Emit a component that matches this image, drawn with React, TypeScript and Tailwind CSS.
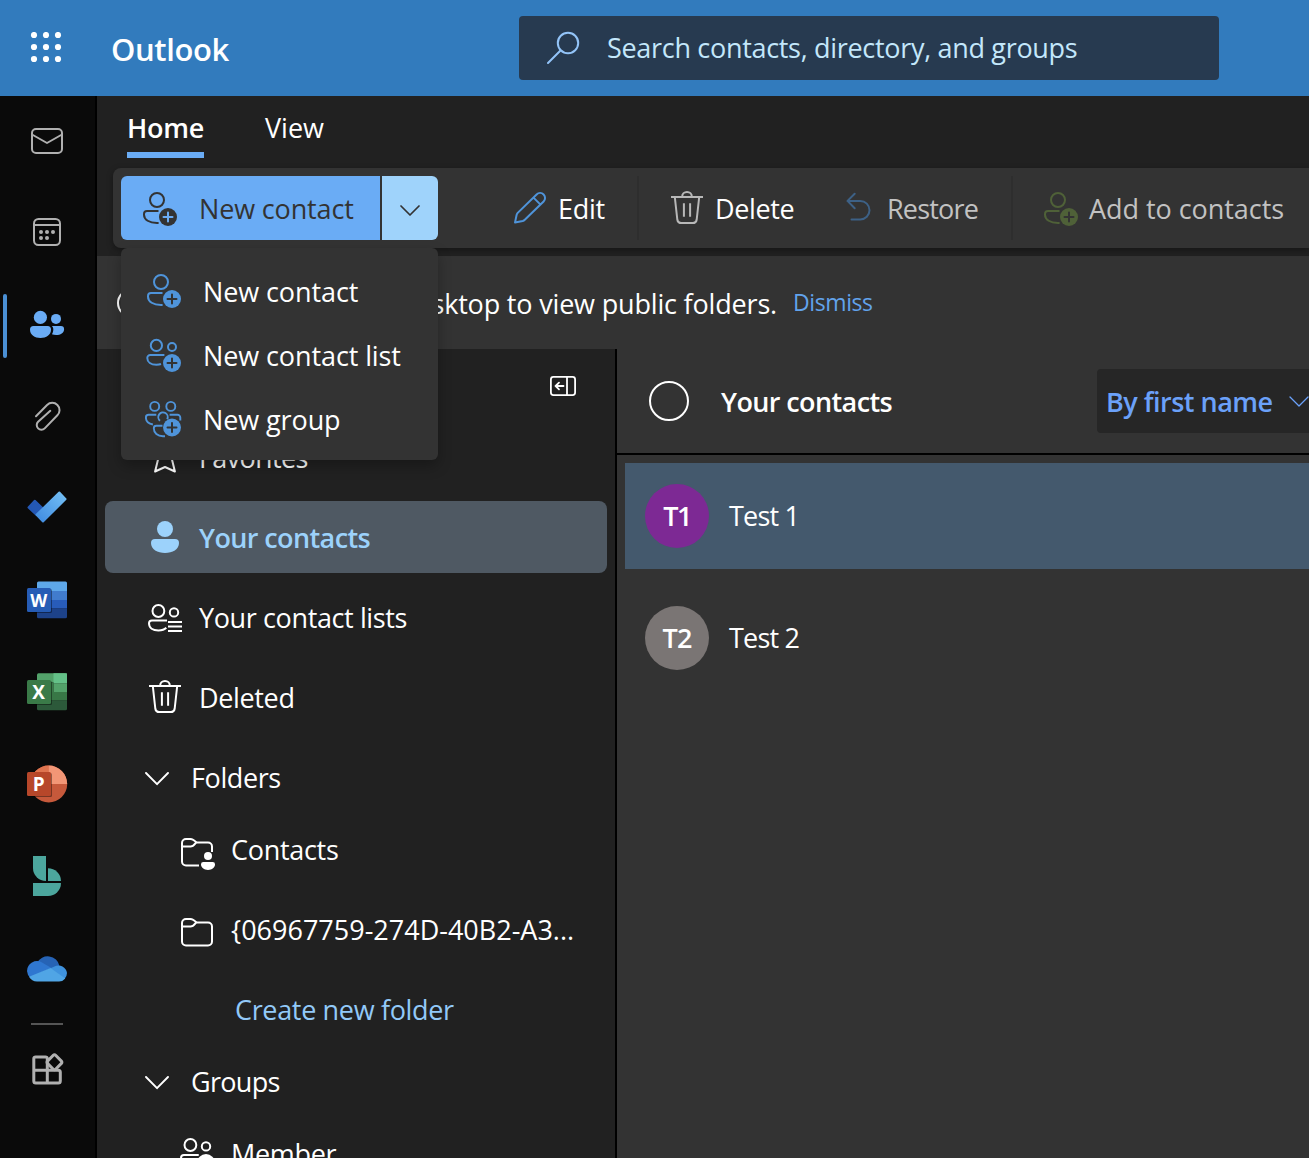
import type { ReactNode } from "react";

type IconProps = { box: string; w: number; h: number; className?: string; sw?: number; children: ReactNode };

function Icon({ box, w, h, className = "", sw = 2, children }: IconProps) {
  return (
    <svg
      viewBox={box}
      width={w}
      height={h}
      fill="none"
      stroke="currentColor"
      strokeWidth={sw}
      strokeLinecap="round"
      strokeLinejoin="round"
      className={`shrink-0 ${className}`}
      aria-hidden="true"
    >
      {children}
    </svg>
  );
}

function Badge({ cx, cy, plus }: { cx: number; cy: number; plus: string }) {
  return (
    <>
      <circle cx={cx} cy={cy} r="9" fill="currentColor" stroke="none" />
      <path d={`M${cx - 4.5} ${cy}h9M${cx} ${cy - 4.5}v9`} stroke={plus} strokeWidth="2" />
    </>
  );
}

function PersonAdd({ className, plus }: { className: string; plus: string }) {
  return (
    <Icon box="0 0 34 34" w={34} h={34} className={className} sw={2}>
      <circle cx="14" cy="8" r="7" />
      <path strokeLinecap="butt" d="M15.5 19H4a3 3 0 0 0-3 3v.8c0 4.900 5.300 8.200 13 8.200h1.600" />
      <Badge cx={25} cy={25} plus={plus} />
    </Icon>
  );
}

function PeopleAdd({ className }: { className: string }) {
  return (
    <Icon box="0 0 36 34" w={36} h={34} className={className} sw={2}>
      <circle cx="10.400" cy="7.400" r="5.600" />
      <circle cx="26" cy="9" r="4" />
      <path strokeLinecap="butt" d="M18.400 17H4.200a2.900 2.900 0 0 0-2.900 2.900c0 4.300 3.700 6.800 9.100 6.800 1.800 0 3.300-.2 4.600-.7" />
      <Badge cx={26} cy={25} plus="#333333" />
    </Icon>
  );
}

function GroupAdd({ className }: { className: string }) {
  return (
    <Icon box="0 0 37 38" w={37} h={38} className={className} sw={1.900}>
      <circle cx="9.700" cy="6.400" r="4.500" />
      <circle cx="25.800" cy="6.400" r="4.500" />
      <path strokeLinecap="butt" d="M11.300 14.800H3.600A2.700 2.700 0 0 0 .9 17.500c0 3.600 2.700 6.300 7 7" />
      <path strokeLinecap="butt" d="M24.600 14.800h8a2.700 2.700 0 0 1 2.700 2.700v3" />
      <path strokeLinecap="butt" d="M15 20.700a4.700 4.700 0 1 1 7.200-1.500M17.500 25.700H11.300a2.500 2.500 0 0 0-2.500 2.500c0 4.700 3.700 8 9.200 8h2" />
      <Badge cx={27} cy={27.500} plus="#333333" />
    </Icon>
  );
}

function Trash({ className }: { className: string }) {
  return (
    <Icon box="0 0 32 34" w={32} h={34} className={className} sw={2}>
      <path strokeLinecap="butt" d="M0 6h32M11.200 6V5.400a4.800 4.400 0 0 1 9.600 0V6M3.800 6l2.500 22.500a4.200 4.200 0 0 0 4.200 3.600h11a4.200 4.200 0 0 0 4.200-3.600L28.200 6" />
      <path strokeLinecap="butt" d="M12.900 12.300v13.500M19.100 12.300v13.500" />
    </Icon>
  );
}

function NavChevron() {
  return (
    <Icon box="0 0 24 14" w={24} h={14} className="mt-[3px] text-white" sw={1.900}>
      <path d="m1 1 11 11.200L23 1" />
    </Icon>
  );
}

const folderBody = "M1 6.500v17a4 4 0 0 0 4 4h22a4 4 0 0 0 4-4V8.500a4 4 0 0 0-4-4H15.500C13.500 2.500 12 1 9.500 1H5a4 4 0 0 0-4 4v1.500";

function Folder() {
  return (
    <Icon box="0 0 35 32" w={35} h={32} className="text-white" sw={2}>
      <path d={folderBody} />
      <path d="M1.500 8.500h8c2.500 0 3.500-1.500 5.500-4" />
    </Icon>
  );
}

function FolderPerson() {
  return (
    <Icon box="0 0 35 32" w={35} h={32} className="text-white" sw={2}>
      <path strokeLinecap="butt" d="M18 27.500H5a4 4 0 0 1-4-4V5a4 4 0 0 1 4-4h4.500c2.500 0 4 1.500 6 3.500h11.500a4 4 0 0 1 4 4V14" />
      <path d="M1.500 8.500h8c2.500 0 3.500-1.500 5.500-4" />
      <g fill="currentColor" stroke="none">
        <circle cx="27" cy="18" r="4" />
        <path d="M22.300 24h9.400a2.300 2.300 0 0 1 2.300 2.300c0 3.500-3 5.600-7 5.600s-7-2.100-7-5.600a2.300 2.300 0 0 1 2.300-2.300z" />
      </g>
    </Icon>
  );
}

function RailCell({ y, className = "text-[#b0b0b0]", sw = 2, children }: { y: number; className?: string; sw?: number; children: ReactNode }) {
  return (
    <Icon box={`0 ${y} 95 92`} w={95} h={92} className={className} sw={sw}>
      {children}
    </Icon>
  );
}

const letter = { fontFamily: "Open Sans", fontWeight: 700, fontSize: 19, fill: "#fff", stroke: "none", textAnchor: "middle" as const };

function Rail() {
  return (
    <aside className="flex w-[97px] shrink-0 flex-col border-r-2 border-black bg-[#0a0a0a]">
      <RailCell y={96}>
        <rect x="32" y="129" width="30" height="24" rx="4" />
        <path d="M32 134.500 47 143l15-8.500" />
      </RailCell>
      <RailCell y={188}>
        <rect x="34" y="219" width="26" height="26" rx="4.500" />
        <path d="M34 225h26" />
        <g fill="currentColor" stroke="none">
          <circle cx="41" cy="232" r="2" />
          <circle cx="47" cy="232" r="2" />
          <circle cx="53" cy="232" r="2" />
          <circle cx="41" cy="238" r="2" />
          <circle cx="47" cy="238" r="2" />
        </g>
      </RailCell>
      <RailCell y={280} className="text-[#6aacf5]">
        <g fill="currentColor" stroke="none">
          <rect x="3" y="294" width="4" height="64" rx="2" fill="#4a8fd4" />
          <circle cx="40.400" cy="317.400" r="6.600" />
          <circle cx="56" cy="318.900" r="5" />
          <path d="M33.500 326h14a3.500 3.500 0 0 1 3.500 3.500c0 5.500-4.700 8.500-10.500 8.500S30 335 30 329.500a3.500 3.500 0 0 1 3.500-3.500z" />
          <path d="M51.900 326h9a3.200 3.200 0 0 1 3.200 3.200c0 3.800-3.600 5.800-8 5.800-1.500 0-2.900-.2-4.200-.7.900-1.500 1.400-3.100 1.400-4.900 0-1.300-.5-2.500-1.400-3.400z" />
        </g>
      </RailCell>
      <RailCell y={372}>
        <path d="M36 416.200 47.100 405a7.200 7.200 0 0 1 10.300 10.300L44.700 428.400a4.600 4.600 0 0 1-6.600-6.600L50.300 410.800" />
      </RailCell>
      <RailCell y={464}>
        <defs>
          <linearGradient id="todo" x1="0" y1="1" x2="1" y2="0">
            <stop offset="0" stopColor="#3f8ae0" />
            <stop offset="1" stopColor="#74c0f5" />
          </linearGradient>
        </defs>
        <path d="m28.500 507.500 6.300-6.800 7.500 7.300-6.300 6.500z" fill="#2458b4" stroke="#2458b4" />
        <path d="M36.500 514.800 59.300 492.500l6.300 6.600L43 521.500z" fill="url(#todo)" stroke="url(#todo)" />
      </RailCell>
      <RailCell y={556}>
        <g stroke="none">
          <path d="M38.500 581.500h27a1.500 1.500 0 0 1 1.500 1.500v8H37v-8a1.500 1.500 0 0 1 1.500-1.500z" fill="#5ea8ea" />
          <path d="M37 591h30v9.200H37z" fill="#417ccd" />
          <path d="M37 600h30v8.500H37z" fill="#285cba" />
          <path d="M37 608.300h30v8.500a1.500 1.500 0 0 1-1.500 1.500h-27a1.500 1.500 0 0 1-1.500-1.500z" fill="#1d4289" />
          <rect x="28" y="589" width="24" height="24" rx="1.500" fill="#000" opacity=".4" />
          <rect x="27" y="588" width="24" height="24" rx="1.500" fill="#265cb5" />
        </g>
        <text x="38.800" y="606.700" {...letter} fontSize={18.500} textLength={17} lengthAdjust="spacingAndGlyphs">W</text>
      </RailCell>
      <RailCell y={648}>
        <g stroke="none">
          <path d="M38.500 673.300H67v9.200H37v-7.700a1.500 1.500 0 0 1 1.500-1.500z" fill="#53a26a" />
          <path d="M53.500 673.300h12a1.500 1.500 0 0 1 1.500 1.500v8.700H53.500z" fill="#64c188" />
          <path d="M37 682.500h16.500V692H37z" fill="#3a7a48" />
          <path d="M53.500 683.300H67v9H53.500z" fill="#53a26a" />
          <path d="M37 692h30v8.500H37z" fill="#387746" />
          <path d="M37 700.300h30v8.500a1.500 1.500 0 0 1-1.500 1.500h-27a1.500 1.500 0 0 1-1.500-1.500z" fill="#2c593a" />
          <rect x="28" y="681" width="24" height="24" rx="1.500" fill="#000" opacity=".4" />
          <rect x="27" y="680" width="24" height="24" rx="1.500" fill="#3a7a48" />
        </g>
        <text x="38.700" y="699" {...letter}>X</text>
      </RailCell>
      <RailCell y={740}>
        <g stroke="none">
          <circle cx="48.700" cy="784" r="18.500" fill="#c6593b" />
          <path d="M30.200 784a18.500 18.500 0 0 1 18.500-18.500V784z" fill="#df744f" />
          <path d="M48.700 765.500A18.500 18.500 0 0 1 67.200 784H48.700z" fill="#f29676" />
          <rect x="28" y="773" width="24" height="24" rx="1.500" fill="#000" opacity=".4" />
          <rect x="27" y="772" width="24" height="24" rx="1.500" fill="#b7472a" />
        </g>
        <text x="38.800" y="791" {...letter}>P</text>
      </RailCell>
      <RailCell y={832}>
        <g fill="#4ca69d" stroke="none">
          <path d="M33 856h13v25a13 13 0 0 1-13-13z" />
          <path d="M48 868.300A13 12.700 0 0 1 61 881H48z" />
          <path d="M33 883h28a13 13 0 0 1-13 13H33z" />
        </g>
      </RailCell>
      <RailCell y={924}>
        <g stroke="none">
          <path d="M37 963a12 12 0 0 1 22.500 3l-8 6z" fill="#2663b5" />
          <path d="M30 977.500A10 10 0 0 1 27 971a10 10 0 0 1 15-8.600l9.500 5.600z" fill="#2f77d0" />
          <path d="m50 968.500 4.500-2A8.500 8.500 0 0 1 67 973a8.500 8.500 0 0 1-2.500 6z" fill="#3f92dd" />
          <path d="M29 976.700 50.500 968 65.300 978.500a8 8 0 0 1-6.300 3H37a10 10 0 0 1-8-4.800z" fill="#50a5e5" />
        </g>
      </RailCell>
      <div className="mt-[7px] ml-[31px] h-0.5 w-8 bg-[#555555]" />
      <Icon box="0 1025 95 92" w={95} h={92} className="text-[#b0b0b0]" sw={3}>
        <path d="M47.300 1070V1058.700a1.800 1.800 0 0 0-1.800-1.800H35.600a1.800 1.800 0 0 0-1.800 1.800V1081a2 2 0 0 0 2 2H58.300a2 2 0 0 0 2-2V1072.200a2 2 0 0 0-2-2H33.800M47.300 1070v13" />
        <path d="m53.300 1055.300-5.800 5.800a1.600 1.600 0 0 0 0 2.300l5.800 5.800a1.600 1.600 0 0 0 2.300 0l5.800-5.800a1.600 1.600 0 0 0 0-2.300l-5.800-5.800a1.600 1.600 0 0 0-2.300 0z" />
      </Icon>
    </aside>
  );
}

function TopBar() {
  return (
    <header className="flex h-24 shrink-0 items-center bg-[#327bbd]">
      <Icon box="0 0 32 32" w={32} h={32} className="ml-[30px] text-white">
        <g fill="currentColor" stroke="none">
          {[4, 16, 28].map((y) => [4, 16, 28].map((x) => <circle key={`${x}-${y}`} cx={x} cy={y - 1} r="3.100" />))}
        </g>
      </Icon>
      <div className="ml-[49px] w-[408px] pt-0.5 text-[31px] font-semibold tracking-[-0.4px] text-white">Outlook</div>
      <div className="flex h-16 w-[700px] items-center rounded bg-[#273a50] text-[#c3e7fb]">
        <Icon box="547 31 34 34" w={34} h={34} className="ml-7 text-[#93c4f8]" sw={2}>
          <circle cx="568" cy="43" r="10.200" />
          <path d="m560.500 50.500-12.500 12.500" />
        </Icon>
        <span className="ml-[26px] text-[27px] tracking-[-0.31px]">Search contacts, directory, and groups</span>
      </div>
    </header>
  );
}

function MenuRow({ icon, label }: { icon: ReactNode; label: string }) {
  return (
    <div className="flex h-16 items-center">
      <div className="flex w-[82px] justify-center pt-0.5">{icon}</div>
      <span className="pt-[5px] tracking-[-0.1px]">{label}</span>
    </div>
  );
}

function CommandBar() {
  return (
    <div className="relative z-10 ml-4 flex h-20 shrink-0 items-center rounded-l-lg bg-[#333333] pl-2 text-[27px] text-white shadow-[0_2px_6px_rgba(0,0,0,0.35)]">
      <div className="relative flex h-16">
        <div className="flex w-[259px] items-center rounded-l-md bg-[#6aacf5] pl-[22px] text-[#333333]">
          <PersonAdd className="mt-0.5 text-[#333333]" plus="#6aacf5" />
          <span className="ml-[22px] pt-[3px] tracking-[-0.15px]">New contact</span>
        </div>
        <div className="ml-0.5 flex w-14 items-center justify-center rounded-r-md bg-[#9fd3fb] text-[#333333]">
          <Icon box="0 0 20 11" w={20} h={11} className="mt-1" sw={1.700}>
            <path d="m1 1 9 9 9-9" />
          </Icon>
        </div>
        <div className="absolute top-[72px] left-0 w-[317px] rounded-md bg-[#333333] py-[10px] shadow-[0_6px_14px_rgba(0,0,0,0.28)]">
          <MenuRow icon={<PersonAdd className="ml-1 text-[#4f94da]" plus="#333333" />} label="New contact" />
          <MenuRow icon={<PeopleAdd className="ml-1 text-[#4f94da]" />} label="New contact list" />
          <MenuRow icon={<GroupAdd className="ml-0.5 -mt-px text-[#4f94da]" />} label="New group" />
        </div>
      </div>
      <Icon box="514 191 34 34" w={34} h={34} className="ml-[76px] text-[#4f94da]" sw={2}>
        <path d="M536.600 194.500a4.900 4.900 0 0 1 7 7L524.800 219.800c-.6.6-1.300 1-2.100 1.200L515 222.600l1.600-7.600c.2-.8.6-1.500 1.100-2.100zM533.500 197.600l7 7" />
      </Icon>
      <span className="ml-[10px] w-[79px] pt-[3px] tracking-[-0.3px]">Edit</span>
      <div className="h-16 w-0.5 bg-[#2e2e2e]" />
      <Trash className="ml-8 text-[#b8b8b8]" />
      <span className="ml-3 w-[130px] pt-[3px] tracking-[-0.35px]">Delete</span>
      <Icon box="845 191 28 32" w={28} h={32} className="-mt-0.5 text-[#3d6186]" sw={2}>
        <path d="m854.700 193.700-7.200 7.200 7.200 7.400M847.500 200.900h12.700a9.300 9.300 0 0 1 0 18.600h-8.700" />
      </Icon>
      <span className="ml-[14px] w-[124px] pt-[3px] tracking-[-0.8px] text-[#c2c2c2]">Restore</span>
      <div className="h-16 w-0.5 bg-[#2e2e2e]" />
      <PersonAdd className="ml-[31px] mt-0.5 text-[#4f6138]" plus="#333333" />
      <span className="ml-[11px] pt-[3px] tracking-[-0.05px] whitespace-nowrap text-[#c2c2c2]">Add to contacts</span>
    </div>
  );
}

function NavRow({ icon, children }: { icon: ReactNode; children: ReactNode }) {
  return (
    <div className="mb-2 flex h-[72px] shrink-0 items-center pl-10">
      <div className="flex w-10 justify-center">{icon}</div>
      <div className="ml-[14px] pt-0.5">{children}</div>
    </div>
  );
}

function FolderPane() {
  return (
    <nav className="flex w-[520px] shrink-0 flex-col border-r-2 border-black px-2 text-[27px] whitespace-nowrap text-white">
      <div className="flex h-[72px] shrink-0 justify-end pt-[26px] pr-[30px]">
        <Icon box="549 375 28 22" w={28} h={22} sw={1.800}>
          <rect x="550.900" y="376.900" width="24.200" height="18.200" rx="2.500" />
          <path d="M567 377v18M555.500 386h8M559 382.700l-3.400 3.300 3.400 3.300" />
        </Icon>
      </div>
      <NavRow
        icon={
          <Icon box="0 0 34 34" w={34} h={34} sw={2}>
            <path d="m17 2.500 4.400 9.200 10 1.400-7.300 7 2.800 11.400L17 27l-9.900 4.500 2.800-11.400-7.300-7 10-1.400z" />
          </Icon>
        }
      >
        <span className="tracking-[-0.6px]">Favorites</span>
      </NavRow>
      <div className="mb-2 flex h-[72px] shrink-0 items-center rounded-lg bg-[#4f5963] pl-10 font-semibold text-[#9cd2fb]">
        <div className="flex w-10 justify-center">
          <Icon box="0 0 28 32" w={28} h={32}>
            <g fill="currentColor" stroke="none">
              <circle cx="14" cy="8" r="8" />
              <path d="M4 18h20a4 4 0 0 1 4 4c0 6.500-6.500 10-14 10S0 28.500 0 22a4 4 0 0 1 4-4z" />
            </g>
          </Icon>
        </div>
        <span className="ml-[14px] pt-0.5 tracking-[-0.6px]">Your contacts</span>
      </div>
      <NavRow
        icon={
          <Icon box="0 0 34 28" w={34} h={28} className="mt-0.5" sw={2}>
            <circle cx="10.400" cy="7" r="5.900" />
            <circle cx="26" cy="8.400" r="4.200" />
            <path strokeLinecap="butt" d="M19 16.400H3.900A2.900 2.900 0 0 0 1 19.300c0 4.600 3.900 7.200 9.400 7.200 3.300 0 6.200-.9 7.900-2.700M20 18h14M20 22.500h14M20 27h14" />
          </Icon>
        }
      >
        <span className="tracking-[-0.38px]">Your contact lists</span>
      </NavRow>
      <NavRow icon={<Trash className="text-white" />}>
        <span className="tracking-[-0.35px]">Deleted</span>
      </NavRow>
      <div className="flex h-[72px] shrink-0 items-center pl-10">
        <NavChevron />
        <span className="ml-[22px] pt-0.5 tracking-[-0.4px]">Folders</span>
      </div>
      <div className="mb-2 flex h-[72px] shrink-0 items-center pl-[75px]">
        <div className="ml-px pt-2.5">
          <FolderPerson />
        </div>
        <span className="ml-[15px] pt-0.5 tracking-[-0.3px]">Contacts</span>
      </div>
      <div className="mb-2 flex h-[72px] shrink-0 items-center pl-[75px]">
        <div className="ml-px pt-2.5">
          <Folder />
        </div>
        <span className="ml-[15px] pt-0.5">{"{06967759-274D-40B2-A3..."}</span>
      </div>
      <div className="flex h-[72px] shrink-0 items-center pt-0.5 pl-[130px] tracking-[-0.34px] text-[#92c9f8]">Create new folder</div>
      <div className="flex h-[72px] shrink-0 items-center pl-10">
        <NavChevron />
        <span className="ml-[22px] pt-0.5 tracking-[-0.7px]">Groups</span>
      </div>
      <div className="flex h-[72px] shrink-0 items-center pl-[75px]">
        <Icon box="0 0 35 34" w={35} h={34} className="mt-0.5" sw={2}>
          <circle cx="10.400" cy="8" r="5.900" />
          <circle cx="26" cy="9.400" r="4.200" />
          <path d="M18 18H4a3 3 0 0 0-3 3c0 4.600 4 7 9 7" />
          <circle cx="26" cy="26" r="9" fill="currentColor" stroke="none" />
        </Icon>
        <span className="ml-4 pt-0.5 tracking-[-0.3px]">Member</span>
      </div>
    </nav>
  );
}

function ContactList() {
  return (
    <section className="flex min-w-0 grow flex-col bg-[#333333] text-[27px] text-white">
      <div className="flex h-[106px] shrink-0 items-center overflow-hidden border-b-2 border-black">
        <div className="ml-8 size-10 shrink-0 rounded-full border-2 border-white" />
        <span className="ml-8 w-[376px] shrink-0 pt-0.5 font-semibold tracking-[-0.6px]">Your contacts</span>
        <div className="flex h-16 w-60 shrink-0 items-center rounded bg-[#262626] pl-[9px] font-semibold whitespace-nowrap text-[#6ba1f9]">
          <span className="w-[182px] pt-0.5 tracking-[-0.5px]">By first name</span>
          <Icon box="0 0 20 11" w={20} h={11} className="ml-px" sw={1.300}>
            <path d="m1 1 9 9 9-9" />
          </Icon>
        </div>
      </div>
      <div className="mt-2 ml-2 flex h-[106px] items-center bg-[#44596d] pl-5">
        <div className="flex size-16 items-center justify-center rounded-full bg-[#7d2994] text-[27px] font-semibold tracking-[-1.5px]">T1</div>
        <span className="ml-5 tracking-[-0.8px]">Test 1</span>
      </div>
      <div className="mt-4 ml-2 flex h-[106px] items-center pl-5">
        <div className="flex size-16 items-center justify-center rounded-full bg-[#7a7574] text-[27px] font-semibold tracking-[-0.8px]">T2</div>
        <span className="ml-5 tracking-[-0.8px]">Test 2</span>
      </div>
    </section>
  );
}

export default function App() {
  return (
    <div className="flex h-[1158px] w-[1309px] flex-col overflow-hidden bg-[#212121] font-['Open_Sans',sans-serif]">
      <TopBar />
      <div className="flex min-h-0 grow">
        <Rail />
        <main className="flex min-w-0 grow flex-col">
          <div className="flex h-[72px] shrink-0 pl-[30px] text-[27px] text-white">
            <div className="flex h-[62px] w-[77px] items-center border-b-[6px] border-[#6aacf5] pt-2 font-semibold tracking-[-0.3px]">Home</div>
            <div className="ml-[61px] flex h-[62px] items-center pt-0.5">View</div>
          </div>
          <CommandBar />
          <div className="mt-2 flex h-[93px] shrink-0 items-center bg-[#333333] text-[27px] whitespace-nowrap text-white">
            <div className="ml-5 size-7 shrink-0 rounded-full border-2 border-white" />
            <div className="ml-[280px] flex w-[352px] shrink-0 justify-end pt-[3px] tracking-[-0.18px]">sktop to view public folders.</div>
            <span className="ml-4 text-[23px] tracking-[-0.4px] text-[#62a3ec]">Dismiss</span>
          </div>
          <div className="flex min-h-0 grow">
            <FolderPane />
            <ContactList />
          </div>
        </main>
      </div>
    </div>
  );
}
